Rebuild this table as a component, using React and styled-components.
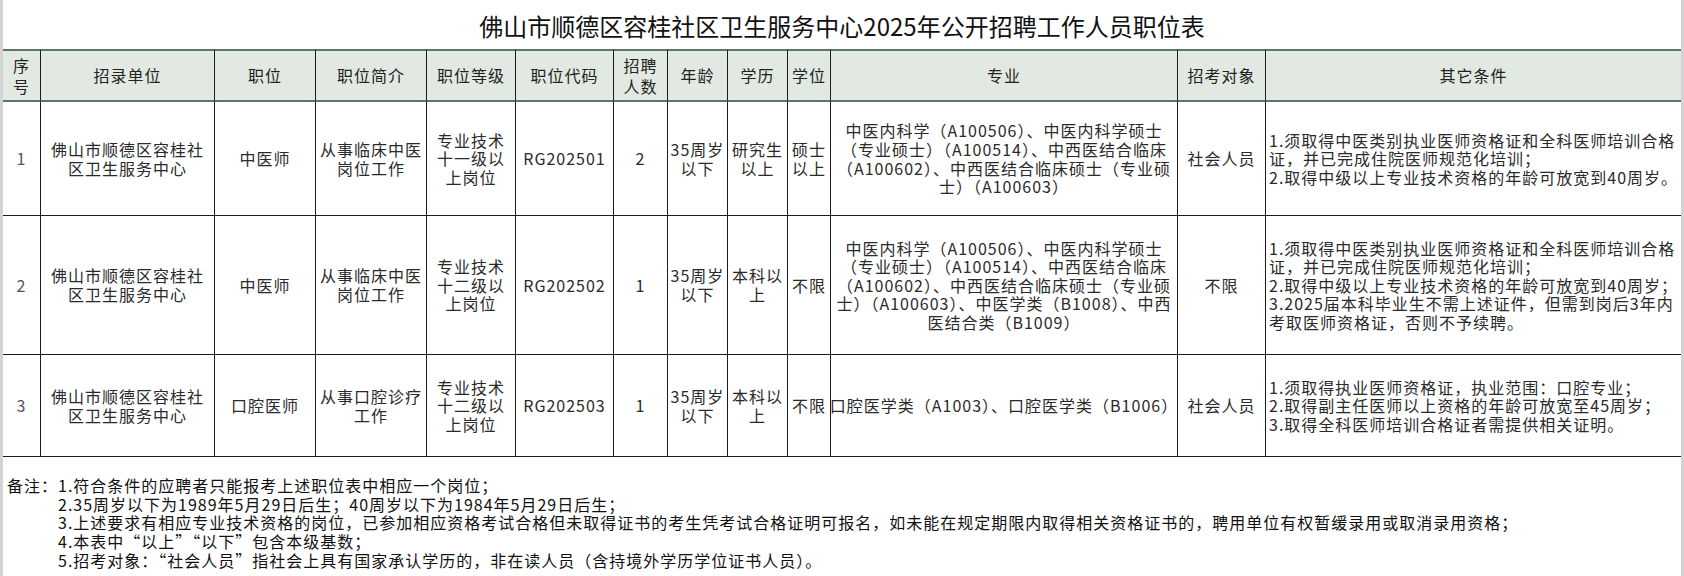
import React from 'react'
import styled, { createGlobalStyle } from 'styled-components'

const GlobalStyle = createGlobalStyle`
  html, body {
    margin: 0;
    padding: 0;
    background: #fff;
  }
  body {
    font-family: "Noto Sans CJK SC", "Noto Sans", sans-serif;
    color: #222;
  }
`

const cols = [38, 174, 101, 111, 89, 98, 54, 60, 60, 43, 347, 88, 415]

const headers = [
    ['序', '号'],
    ['招录单位'],
    ['职位'],
    ['职位简介'],
    ['职位等级'],
    ['职位代码'],
    ['招聘', '人数'],
    ['年龄'],
    ['学历'],
    ['学位'],
    ['专业'],
    ['招考对象'],
    ['其它条件'],
]

const unit = ['佛山市顺德区容桂社', '区卫生服务中心']
const grade12 = ['专业技术', '十二级以', '上岗位']

const rows = [
    [
        ['1'], unit, ['中医师'], ['从事临床中医', '岗位工作'], ['专业技术', '十一级以', '上岗位'],
        ['RG202501'], ['2'], ['35周岁', '以下'], ['研究生', '以上'], ['硕士', '以上'],
        [
            '中医内科学（A100506）、中医内科学硕士',
            '（专业硕士）（A100514）、中西医结合临床',
            '（A100602）、中西医结合临床硕士（专业硕',
            '士）（A100603）',
        ],
        ['社会人员'],
        [
            '1.须取得中医类别执业医师资格证和全科医师培训合格',
            '证，并已完成住院医师规范化培训；',
            '2.取得中级以上专业技术资格的年龄可放宽到40周岁。',
        ],
    ],
    [
        ['2'], unit, ['中医师'], ['从事临床中医', '岗位工作'], grade12,
        ['RG202502'], ['1'], ['35周岁', '以下'], ['本科以', '上'], ['不限'],
        [
            '中医内科学（A100506）、中医内科学硕士',
            '（专业硕士）（A100514）、中西医结合临床',
            '（A100602）、中西医结合临床硕士（专业硕',
            '士）（A100603）、中医学类（B1008）、中西',
            '医结合类（B1009）',
        ],
        ['不限'],
        [
            '1.须取得中医类别执业医师资格证和全科医师培训合格',
            '证，并已完成住院医师规范化培训；',
            '2.取得中级以上专业技术资格的年龄可放宽到40周岁；',
            '3.2025届本科毕业生不需上述证件，但需到岗后3年内',
            '考取医师资格证，否则不予续聘。',
        ],
    ],
    [
        ['3'], unit, ['口腔医师'], ['从事口腔诊疗', '工作'], grade12,
        ['RG202503'], ['1'], ['35周岁', '以下'], ['本科以', '上'], ['不限'],
        ['口腔医学类（A1003）、口腔医学类（B1006）'],
        ['社会人员'],
        [
            '1.须取得执业医师资格证，执业范围：口腔专业；',
            '2.取得副主任医师以上资格的年龄可放宽至45周岁；',
            '3.取得全科医师培训合格证者需提供相关证明。',
        ],
    ],
]

const notes = [
    '1.符合条件的应聘者只能报考上述职位表中相应一个岗位；',
    '2.35周岁以下为1989年5月29日后生；40周岁以下为1984年5月29日后生；',
    '3.上述要求有相应专业技术资格的岗位，已参加相应资格考试合格但未取得证书的考生凭考试合格证明可报名，如未能在规定期限内取得相关资格证书的，聘用单位有权暂缓录用或取消录用资格；',
    '4.本表中“以上”“以下”包含本级基数；',
    '5.招考对象：“社会人员”指社会上具有国家承认学历的，非在读人员（含持境外学历学位证书人员）。',
]

function App() {
    return (
        <>
            <GlobalStyle />
            <Page>
                <Title>佛山市顺德区容桂社区卫生服务中心2025年公开招聘工作人员职位表</Title>
                <Table>
                    {headers.map((h, i) => (
                        <HeadCell key={i} $last={i === headers.length - 1}>
                            {h.map((t, j) => <Line key={j}>{t}</Line>)}
                        </HeadCell>
                    ))}
                    {rows.map((row, r) =>
                        row.map((lines, c) => (
                            <Cell
                                key={`${r}-${c}`}
                                $left={c === row.length - 1}
                                $last={c === row.length - 1}
                                $muted={c === 0}
                            >
                                {lines.map((t, j) => (
                                    <Line key={j} $left={c === row.length - 1}>{t}</Line>
                                ))}
                            </Cell>
                        ))
                    )}
                </Table>
                <Notes>
                    <NoteLabel>备注：</NoteLabel>
                    <NoteList>
                        {notes.map((n, i) => <NoteLine key={i}>{n}</NoteLine>)}
                    </NoteList>
                </Notes>
            </Page>
        </>
    )
}

export default App

const Page = styled.div`
  width: 1684px;
  height: 576px;
  box-sizing: border-box;
  border-left: 3px solid #d3d3d3;
  border-right: 3px solid #d3d3d3;
  overflow: hidden;
  background: #fff;
`

const Title = styled.h1`
  margin: 0;
  height: 49px;
  display: flex;
  align-items: center;
  justify-content: center;
  font-size: 24px;
  font-weight: 400;
  color: #111;
  padding-top: 2px;
  box-sizing: border-box;
`

const Table = styled.div`
  display: grid;
  grid-template-columns: ${cols.map((w) => `${w}px`).join(' ')};
  grid-template-rows: 53px 114px 139px 102px;
  font-size: 16px;
  letter-spacing: 1px;
  line-height: 18.6px;
`

const HeadCell = styled.div`
  box-sizing: border-box;
  background: #e2e9e3;
  border-top: 2px solid #58786a;
  border-bottom: 2px solid #58786a;
  border-right: ${(p) => (p.$last ? 'none' : '1px solid #1c1c1c')};
  display: flex;
  flex-direction: column;
  justify-content: center;
  color: #222;
  line-height: 21px;
`

const Cell = styled.div`
  box-sizing: border-box;
  border-bottom: 1px solid #1c1c1c;
  border-right: ${(p) => (p.$last ? 'none' : '1px solid #1c1c1c')};
  display: flex;
  flex-direction: column;
  justify-content: center;
  overflow: hidden;
  padding-left: ${(p) => (p.$left ? '3px' : '0')};
  color: ${(p) => (p.$muted ? '#555' : '#2a2a2a')};
`

const Line = styled.div`
  display: flex;
  justify-content: ${(p) => (p.$left ? 'flex-start' : 'center')};
  white-space: nowrap;
`

const Notes = styled.div`
  display: flex;
  padding: 19px 0 0 4px;
  font-size: 16px;
  letter-spacing: 1px;
  line-height: 18.7px;
  color: #111;
`

const NoteLabel = styled.span`
  white-space: nowrap;
`

const NoteList = styled.div`
  display: flex;
  flex-direction: column;
`

const NoteLine = styled.div`
  white-space: nowrap;
`
